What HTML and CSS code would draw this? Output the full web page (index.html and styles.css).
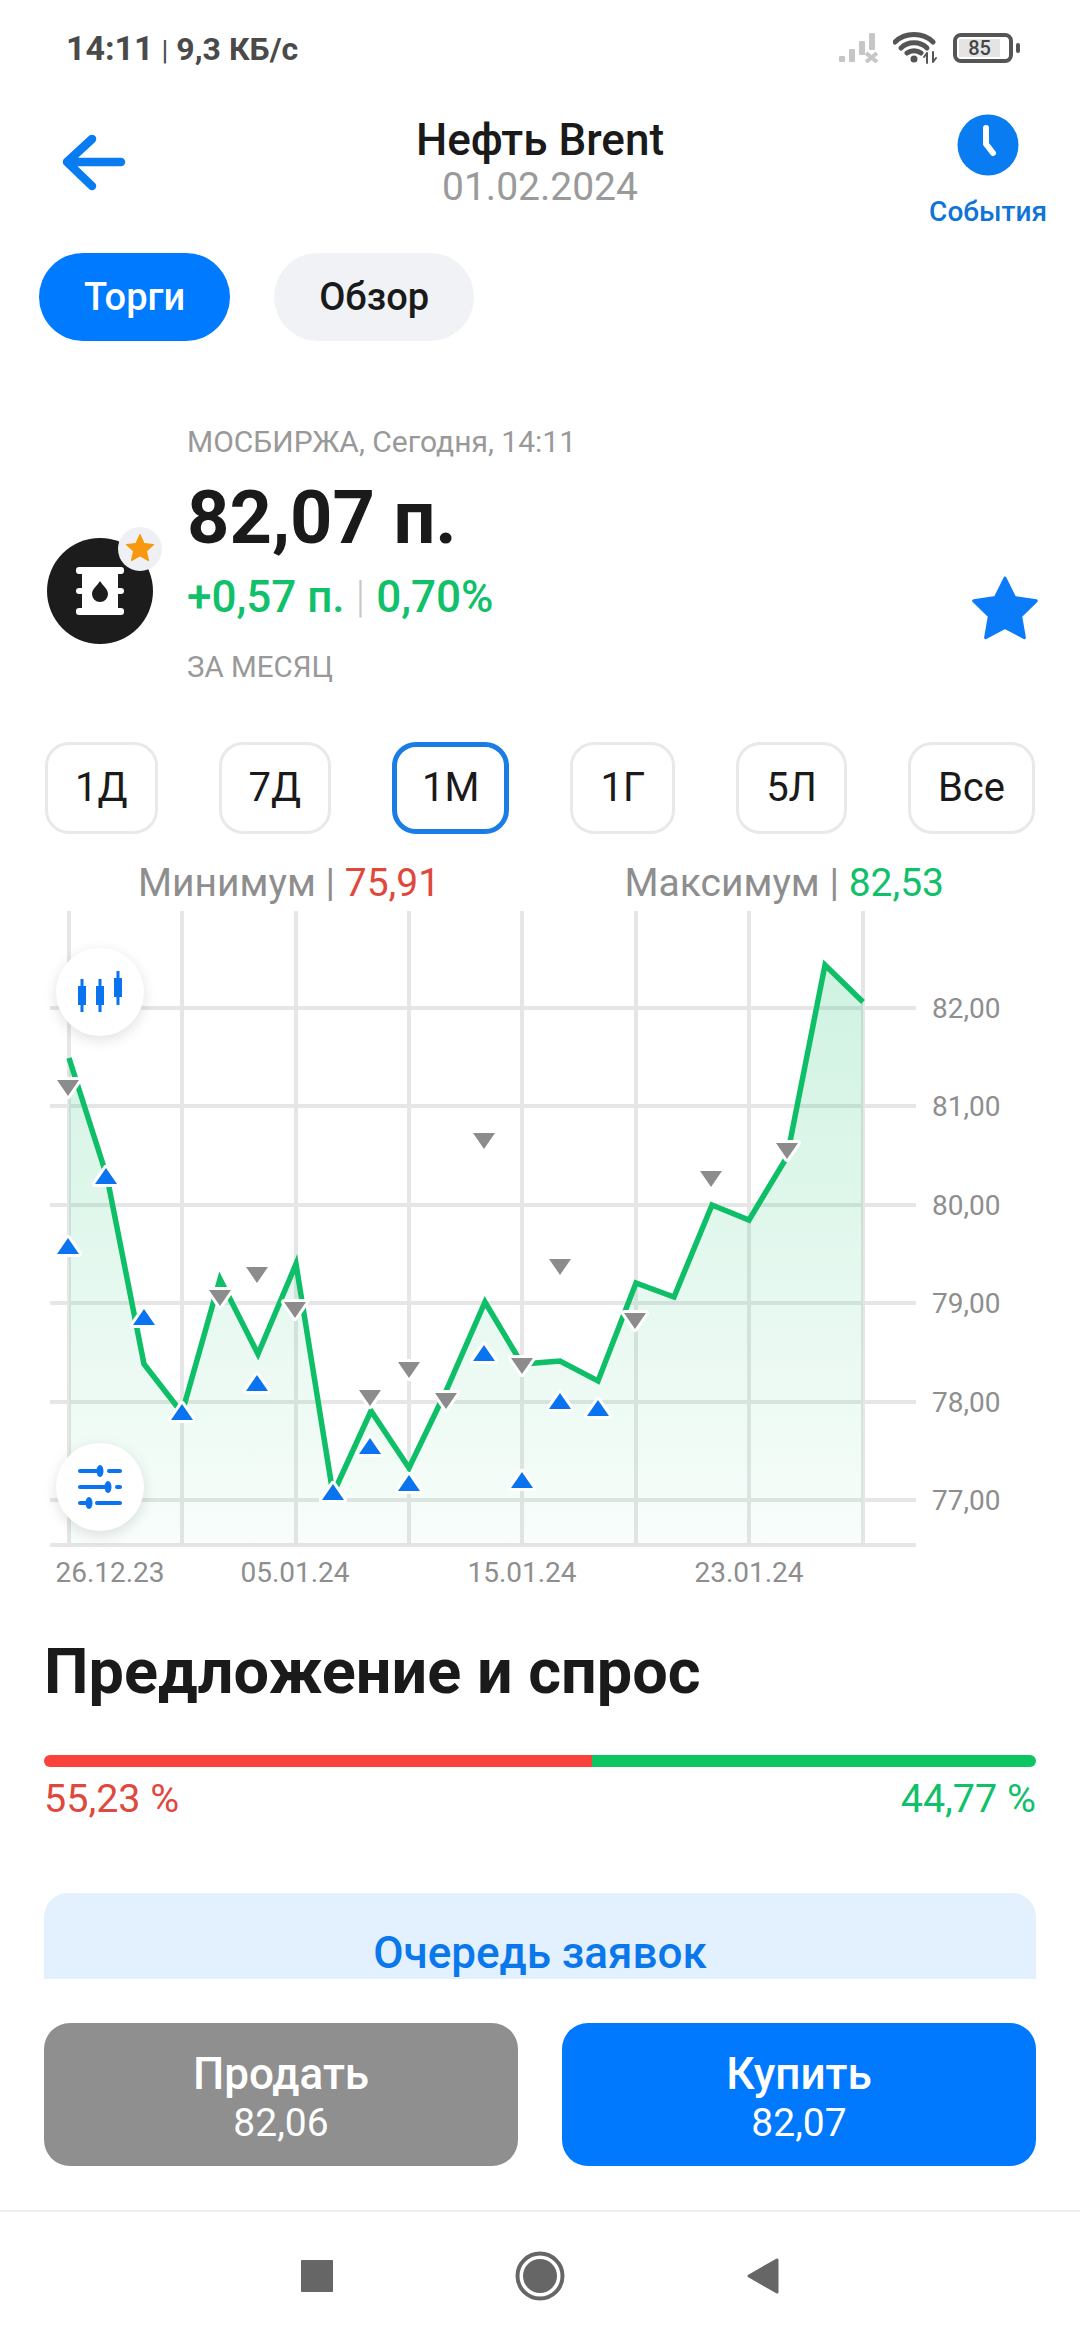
FILE: index.html
```html
<!DOCTYPE html>
<html lang="ru">
<head>
    <meta charset="UTF-8">
    <meta name="viewport" content="width=device-width, initial-scale=1.0">
    <title>Нефть Brent</title>
    <link rel="stylesheet" href="styles.css">
</head>
<body>
    <!-- Status bar -->
    <div class="status-bar">
        <div class="status-text"><span class="status-time">14:11</span> <span class="status-sep">|</span> 9,3 КБ/с</div>
        <div class="status-icons">
            <svg class="icon-signal" width="40" height="30" viewBox="0 0 40 30">
                <rect x="0" y="23" width="6" height="6" rx="1"/>
                <rect x="10" y="16" width="6" height="13" rx="1"/>
                <rect x="20" y="8" width="6" height="14" rx="1"/>
                <rect x="30" y="0" width="6" height="17" rx="1"/>
                <path class="signal-x" d="M27 20 L38 29 M38 20 L27 29"/>
            </svg>
            <svg class="icon-wifi" width="46" height="32" viewBox="0 0 46 32">
                <path d="M2 10 C12 0 30 0 40 10"/>
                <path d="M8 16 C15 9 27 9 34 16"/>
                <path d="M14 21 C18 18 24 18 28 21"/>
                <circle class="wifi-dot" cx="21" cy="27" r="3.5"/>
                <path class="wifi-arrows" d="M34 21 V31 M31 25 L34 21 M40 20 V30 M43 26 L40 30"/>
            </svg>
            <div class="battery">
                <div class="battery-body"><span class="battery-level">85</span></div>
                <div class="battery-nub"></div>
            </div>
        </div>
    </div>

    <!-- Header -->
    <div class="top-header">
        <div class="back-cell">
            <svg width="64" height="56" viewBox="0 0 64 56">
                <path class="back-arrow" d="M30 4 L5 27 L30 51 M6 27 H59"/>
            </svg>
        </div>
        <div class="title-cell">
            <div class="title">Нефть Brent</div>
            <div class="title-date">01.02.2024</div>
        </div>
        <div class="events-cell">
            <div class="events">
                <svg width="62" height="62" viewBox="0 0 62 62">
                    <circle class="clock-face" cx="31" cy="31" r="30.5"/>
                    <path class="clock-hands" d="M29 14 V30 L36 39"/>
                </svg>
                <div class="events-label">События</div>
            </div>
        </div>
    </div>

    <!-- Tabs -->
    <div class="tabs">
        <div class="tab tab-active">Торги</div>
        <div class="tab">Обзор</div>
    </div>

    <!-- Quote -->
    <div class="quote">
        <div class="logo">
            <svg width="106" height="106" viewBox="0 0 106 106">
                <circle class="logo-bg" cx="53" cy="53" r="53"/>
                <rect class="barrel" x="29" y="29" width="48" height="7" rx="3"/>
                <rect class="barrel" x="29" y="70" width="48" height="7" rx="3"/>
                <rect class="barrel" x="35" y="32" width="36" height="42"/>
                <rect class="barrel" x="29" y="50" width="48" height="6" rx="3"/>
                <path class="drop" d="M53 43 C56 48 61 51 61 56 A8 8 0 0 1 45 56 C45 51 50 48 53 43 Z"/>
            </svg>
            <div class="logo-badge">
                <svg width="32" height="32" viewBox="-36 -36 72 72">
                    <polygon class="star-orange" points="0,-32 8.8,-12.1 30.4,-9.9 14.3,4.6 18.8,25.9 0,15 -18.8,25.9 -14.3,4.6 -30.4,-9.9 -8.8,-12.1"/>
                </svg>
            </div>
        </div>
        <div class="quote-info">
            <div class="quote-meta">МОСБИРЖА, Сегодня, 14:11</div>
            <div class="quote-price">82,07 п.</div>
            <div class="quote-change">+0,57 п. <span class="change-sep">|</span> 0,70%</div>
            <div class="quote-period">ЗА МЕСЯЦ</div>
        </div>
        <svg class="fav-star" width="74" height="74" viewBox="-36 -36 72 72">
            <polygon class="star-blue" points="0,-32 9.4,-13 30.4,-9.9 15.2,4.9 18.8,25.9 0,16 -18.8,25.9 -15.2,4.9 -30.4,-9.9 -9.4,-13"/>
        </svg>
    </div>

    <!-- Period buttons -->
    <div class="periods">
        <div class="period">1Д</div>
        <div class="period">7Д</div>
        <div class="period period-active">1М</div>
        <div class="period">1Г</div>
        <div class="period">5Л</div>
        <div class="period">Все</div>
    </div>

    <div class="range">
        <div>Минимум | <span class="red">75,91</span></div>
        <div>Максимум | <span class="green">82,53</span></div>
    </div>

    <!-- Chart -->
    <div class="chart">
        <svg class="chart-svg" width="1080" height="695" viewBox="0 905 1080 695">
            <defs>
                <linearGradient id="areaFill" x1="0" y1="0" x2="0" y2="1">
                    <stop offset="0" stop-color="#0fc06a" stop-opacity="0.2"/>
                    <stop offset="1" stop-color="#0fc06a" stop-opacity="0.03"/>
                </linearGradient>
                <path id="tri-up" d="M-11 8 L0 -8 L11 8 Z"/>
                <path id="tri-down" d="M-11 -8 L11 -8 L0 8 Z"/>
            </defs>

            <g class="grid">
                <path d="M50 1008 H916 M50 1106 H916 M50 1205 H916 M50 1303 H916 M50 1402 H916 M50 1500 H916 M50 1545 H916"/>
                <path d="M69 911 V1545 M182 911 V1545 M296 911 V1545 M409 911 V1545 M522 911 V1545 M636 911 V1545 M749 911 V1545 M863 911 V1545"/>
            </g>

            <path class="area" fill="url(#areaFill)" d="M69 1058 L107 1177 L144 1364 L182 1413 L220 1279 L258 1354 L296 1264 L333 1494 L371 1411 L409 1468 L446 1391 L485 1302 L522 1364 L560 1361 L598 1381 L636 1283 L674 1297 L712 1205 L749 1220 L787 1157 L825 965 L863 1002 L863 1545 L69 1545 Z"/>
            <path class="price-line" d="M69 1058 L107 1177 L144 1364 L182 1413 L220 1279 L258 1354 L296 1264 L333 1494 L371 1411 L409 1468 L446 1391 L485 1302 L522 1364 L560 1361 L598 1381 L636 1283 L674 1297 L712 1205 L749 1220 L787 1157 L825 965 L863 1002"/>

            <g class="mark-buy">
                <use href="#tri-up" x="68" y="1246"/>
                <use href="#tri-up" x="106" y="1176"/>
                <use href="#tri-up" x="144" y="1317"/>
                <use href="#tri-up" x="182" y="1412"/>
                <use href="#tri-up" x="257" y="1383"/>
                <use href="#tri-up" x="333" y="1492"/>
                <use href="#tri-up" x="370" y="1446"/>
                <use href="#tri-up" x="409" y="1483"/>
                <use href="#tri-up" x="484" y="1353"/>
                <use href="#tri-up" x="522" y="1480"/>
                <use href="#tri-up" x="560" y="1401"/>
                <use href="#tri-up" x="598" y="1408"/>
            </g>
            <g class="mark-sell">
                <use href="#tri-down" x="68" y="1088"/>
                <use href="#tri-down" x="220" y="1298"/>
                <use href="#tri-down" x="257" y="1275"/>
                <use href="#tri-down" x="295" y="1310"/>
                <use href="#tri-down" x="370" y="1398"/>
                <use href="#tri-down" x="409" y="1370"/>
                <use href="#tri-down" x="446" y="1401"/>
                <use href="#tri-down" x="484" y="1141"/>
                <use href="#tri-down" x="522" y="1366"/>
                <use href="#tri-down" x="560" y="1267"/>
                <use href="#tri-down" x="635" y="1321"/>
                <use href="#tri-down" x="711" y="1179"/>
                <use href="#tri-down" x="787" y="1151"/>
            </g>

            <g class="axis-y">
                <text x="932" y="1018">82,00</text>
                <text x="932" y="1116">81,00</text>
                <text x="932" y="1215">80,00</text>
                <text x="932" y="1313">79,00</text>
                <text x="932" y="1412">78,00</text>
                <text x="932" y="1510">77,00</text>
            </g>
            <g class="axis-x">
                <text x="110" y="1582">26.12.23</text>
                <text x="295" y="1582">05.01.24</text>
                <text x="522" y="1582">15.01.24</text>
                <text x="749" y="1582">23.01.24</text>
            </g>
        </svg>

        <div class="chart-btn chart-btn-type">
            <svg width="44" height="44" viewBox="0 0 44 44">
                <path class="candle-wick" d="M4 9 V42 M22 9 V42 M40 1 V35"/>
                <rect class="candle-body" x="0" y="16" width="8" height="19"/>
                <rect class="candle-body" x="18" y="16" width="8" height="19"/>
                <rect class="candle-body" x="36" y="8" width="8" height="19"/>
            </svg>
        </div>
        <div class="chart-btn chart-btn-filter">
            <svg width="44" height="44" viewBox="0 0 44 44">
                <path class="slider-line" d="M2 6 H20 M31 6 H42 M2 22 H28 M39 22 H42 M2 38 H8 M19 38 H42"/>
                <ellipse class="slider-knob" cx="22" cy="6" rx="3.5" ry="6"/>
                <ellipse class="slider-knob" cx="30" cy="22" rx="3.5" ry="6"/>
                <ellipse class="slider-knob" cx="11" cy="38" rx="3.5" ry="6"/>
            </svg>
        </div>
    </div>

    <!-- Supply and demand -->
    <h2 class="section-title">Предложение и спрос</h2>
    <div class="balance-bar">
        <div class="balance-sell" style="width: 55.23%"></div>
        <div class="balance-buy" style="width: 44.77%"></div>
    </div>
    <div class="balance-labels">
        <span class="red">55,23 %</span>
        <span class="green">44,77 %</span>
    </div>

    <div class="queue-card">Очередь заявок</div>

    <!-- Trade buttons -->
    <div class="trade">
        <div class="trade-btn trade-sell">
            <div class="trade-name">Продать</div>
            <div class="trade-price">82,06</div>
        </div>
        <div class="trade-btn trade-buy">
            <div class="trade-name">Купить</div>
            <div class="trade-price">82,07</div>
        </div>
    </div>

    <!-- Navigation bar -->
    <div class="nav-bar">
        <svg width="32" height="32" viewBox="0 0 32 32"><rect class="nav-fill" width="32" height="32" rx="1"/></svg>
        <svg width="50" height="50" viewBox="0 0 50 50">
            <circle class="nav-ring" cx="25" cy="25" r="22.5"/>
            <circle class="nav-fill" cx="25" cy="25" r="17"/>
        </svg>
        <svg width="32" height="36" viewBox="0 0 32 36"><path class="nav-fill nav-back" d="M30 2 V34 L2 18 Z"/></svg>
    </div>
</body>
</html>
```

FILE: styles.css
```css
* {
    box-sizing: border-box;
}
body {
    margin: 0;
    width: 1080px;
    height: 2340px;
    overflow: hidden;
    background: #fff;
    font-family: Roboto, "Noto Sans", sans-serif;
    color: #1a1a1a;
}
.red {
    color: #e0483e;
}
.green {
    color: #10c06a;
}

/* status bar */
.status-bar {
    height: 96px;
    padding: 0 60px 0 66px;
    display: flex;
    align-items: center;
    justify-content: space-between;
}
.status-text {
    font-size: 32px;
    font-weight: 700;
    color: #4a4a4a;
}
.status-time {
    font-size: 34px;
}
.status-sep {
    font-weight: 400;
    font-size: 28px;
}
.status-icons {
    display: flex;
    align-items: center;
    gap: 14px;
}
.icon-signal rect {
    fill: #c6c6c6;
}
.signal-x {
    stroke: #c6c6c6;
    stroke-width: 4;
    fill: none;
}
.icon-wifi path {
    fill: none;
    stroke: #555;
    stroke-width: 5;
    stroke-linecap: round;
}
.icon-wifi .wifi-arrows {
    stroke-width: 2;
}
.wifi-dot {
    fill: #555;
}
.battery {
    display: flex;
    align-items: center;
    gap: 3px;
}
.battery-body {
    width: 60px;
    height: 30px;
    border: 4px solid #555;
    border-radius: 8px;
    padding: 2px;
}
.battery-level {
    display: block;
    width: 41px;
    height: 18px;
    background: #e4e4e4;
    font-size: 20px;
    line-height: 18px;
    font-weight: 500;
    color: #444;
    text-align: center;
}
.battery-nub {
    width: 4px;
    height: 10px;
    background: #555;
    border-radius: 2px;
}

/* header */
.top-header {
    display: grid;
    grid-template-columns: 1fr auto 1fr;
    padding-top: 18px;
}
.back-cell {
    padding: 21px 0 0 62px;
}
.back-arrow {
    fill: none;
    stroke: #0a7cf2;
    stroke-width: 8.5;
    stroke-linecap: round;
    stroke-linejoin: round;
}
.title-cell {
    text-align: center;
    padding-top: 1px;
}
.title {
    font-size: 44px;
    line-height: 50px;
    font-weight: 500;
}
.title-date {
    font-size: 39px;
    line-height: 44px;
    color: #9a9a9a;
}
.events-cell {
    display: flex;
    justify-content: flex-end;
    padding-right: 33px;
}
.events {
    display: flex;
    flex-direction: column;
    align-items: center;
}
.clock-face {
    fill: #0a7cf2;
}
.clock-hands {
    fill: none;
    stroke: #fff;
    stroke-width: 6;
    stroke-linecap: round;
    stroke-linejoin: round;
}
.events-label {
    margin-top: 18px;
    font-size: 28px;
    line-height: 36px;
    font-weight: 500;
    color: #0f74d8;
}

/* tabs */
.tabs {
    display: flex;
    gap: 44px;
    margin-top: 23px;
    padding-left: 39px;
}
.tab {
    height: 88px;
    padding: 0 45px;
    border-radius: 44px;
    background: #f0f2f5;
    font-size: 38px;
    line-height: 88px;
    font-weight: 500;
}
.tab-active {
    background: #007aff;
    color: #fff;
}

/* quote */
.quote {
    display: flex;
    margin-top: 83px;
    padding: 0 38px 0 47px;
}
.logo {
    position: relative;
    width: 106px;
    height: 106px;
    margin-top: 114px;
    margin-right: 34px;
}
.logo-bg {
    fill: #1c1c1c;
}
.barrel {
    fill: #fff;
}
.drop {
    fill: #1c1c1c;
}
.logo-badge {
    position: absolute;
    top: -11px;
    right: -9px;
    width: 44px;
    height: 44px;
    border-radius: 50%;
    background: #eef0f3;
    display: flex;
    align-items: center;
    justify-content: center;
}
.star-orange {
    fill: #f7980f;
    stroke: #f7980f;
    stroke-width: 3;
    stroke-linejoin: round;
}
.quote-info {
    flex: 1;
}
.quote-meta {
    font-size: 30px;
    line-height: 36px;
    color: #999;
}
.quote-price {
    margin-top: 18px;
    font-size: 74px;
    line-height: 80px;
    font-weight: 700;
}
.quote-change {
    margin-top: 14px;
    font-size: 44px;
    line-height: 50px;
    font-weight: 500;
    color: #10c06a;
}
.change-sep {
    font-weight: 300;
    color: #c8c8c8;
}
.quote-period {
    margin-top: 27px;
    font-size: 29.5px;
    line-height: 36px;
    color: #999;
}
.fav-star {
    margin-top: 150px;
}
.star-blue {
    fill: #0a7cf9;
    stroke: #0a7cf9;
    stroke-width: 3;
    stroke-linejoin: round;
}

/* periods */
.periods {
    display: flex;
    justify-content: space-between;
    margin-top: 57px;
    padding: 0 45px;
}
.period {
    height: 92px;
    padding: 0 27px;
    border: 3px solid #e9e9e9;
    border-radius: 24px;
    font-size: 40px;
    line-height: 86px;
}
.period-active {
    padding: 0 25px;
    border: 5px solid #1a7de6;
    line-height: 82px;
}
.range {
    display: flex;
    justify-content: space-between;
    margin-top: 27px;
    padding: 0 136px 0 138px;
    font-size: 39px;
    line-height: 44px;
    color: #8e8e8e;
}

/* chart */
.chart {
    position: relative;
    height: 695px;
}
.chart-svg {
    display: block;
}
.grid path {
    fill: none;
    stroke: #e6e6e6;
    stroke-width: 4;
}
.price-line {
    fill: none;
    stroke: #0fbf68;
    stroke-width: 5.5;
    stroke-linejoin: miter;
}
.mark-buy use {
    fill: #0a74f0;
    stroke: #fff;
    stroke-width: 6;
    stroke-linejoin: round;
    paint-order: stroke;
}
.mark-sell use {
    fill: #8c8c8c;
    stroke: #fff;
    stroke-width: 6;
    stroke-linejoin: round;
    paint-order: stroke;
}
.axis-y text,
.axis-x text {
    font-size: 28px;
    fill: #8e8e8e;
}
.axis-x text {
    text-anchor: middle;
}
.chart-btn {
    position: absolute;
    left: 56px;
    width: 88px;
    height: 88px;
    border-radius: 50%;
    background: #fff;
    box-shadow: 0 4px 14px rgba(0,0,0,0.12);
    display: flex;
    align-items: center;
    justify-content: center;
}
.chart-btn-type {
    top: 43px;
}
.chart-btn-filter {
    top: 538px;
}
.candle-wick {
    fill: none;
    stroke: #0a74f0;
    stroke-width: 3;
}
.candle-body {
    fill: #0a74f0;
}
.slider-line {
    fill: none;
    stroke: #0a74f0;
    stroke-width: 4;
    stroke-linecap: round;
}
.slider-knob {
    fill: #0a74f0;
}

/* supply and demand */
.section-title {
    margin: 36px 0 0;
    padding-left: 44px;
    font-size: 63px;
    line-height: 72px;
    font-weight: 700;
}
.balance-bar {
    display: flex;
    height: 12px;
    margin: 47px 44px 0;
    border-radius: 6px;
    overflow: hidden;
}
.balance-sell {
    background: #f9423a;
}
.balance-buy {
    background: #0cc563;
}
.balance-labels {
    display: flex;
    justify-content: space-between;
    margin-top: 10px;
    padding: 0 44px;
    font-size: 39.5px;
    line-height: 44px;
}
.queue-card {
    height: 86px;
    margin: 72px 44px 0;
    padding-top: 35px;
    border-radius: 24px 24px 0 0;
    background: #e3f0fe;
    overflow: hidden;
    font-size: 44px;
    line-height: 51px;
    font-weight: 500;
    text-align: center;
    color: #0a78ea;
}

/* trade buttons */
.trade {
    display: flex;
    gap: 44px;
    margin-top: 44px;
    padding: 0 44px;
}
.trade-btn {
    flex: 1;
    height: 143px;
    padding-top: 25px;
    border-radius: 26px;
    color: #fff;
    text-align: center;
}
.trade-sell {
    background: #8f8f8f;
}
.trade-buy {
    background: #0079ff;
}
.trade-name {
    font-size: 44px;
    line-height: 52px;
    font-weight: 500;
}
.trade-price {
    font-size: 39px;
    line-height: 46px;
}

/* navigation */
.nav-bar {
    height: 130px;
    margin-top: 44px;
    border-top: 2px solid #eeeeee;
    display: flex;
    align-items: center;
    justify-content: center;
    gap: 182px;
}
.nav-fill {
    fill: #666;
}
.nav-ring {
    fill: none;
    stroke: #666;
    stroke-width: 4;
}
.nav-back {
    stroke: #666;
    stroke-width: 3;
    stroke-linejoin: round;
}
```
